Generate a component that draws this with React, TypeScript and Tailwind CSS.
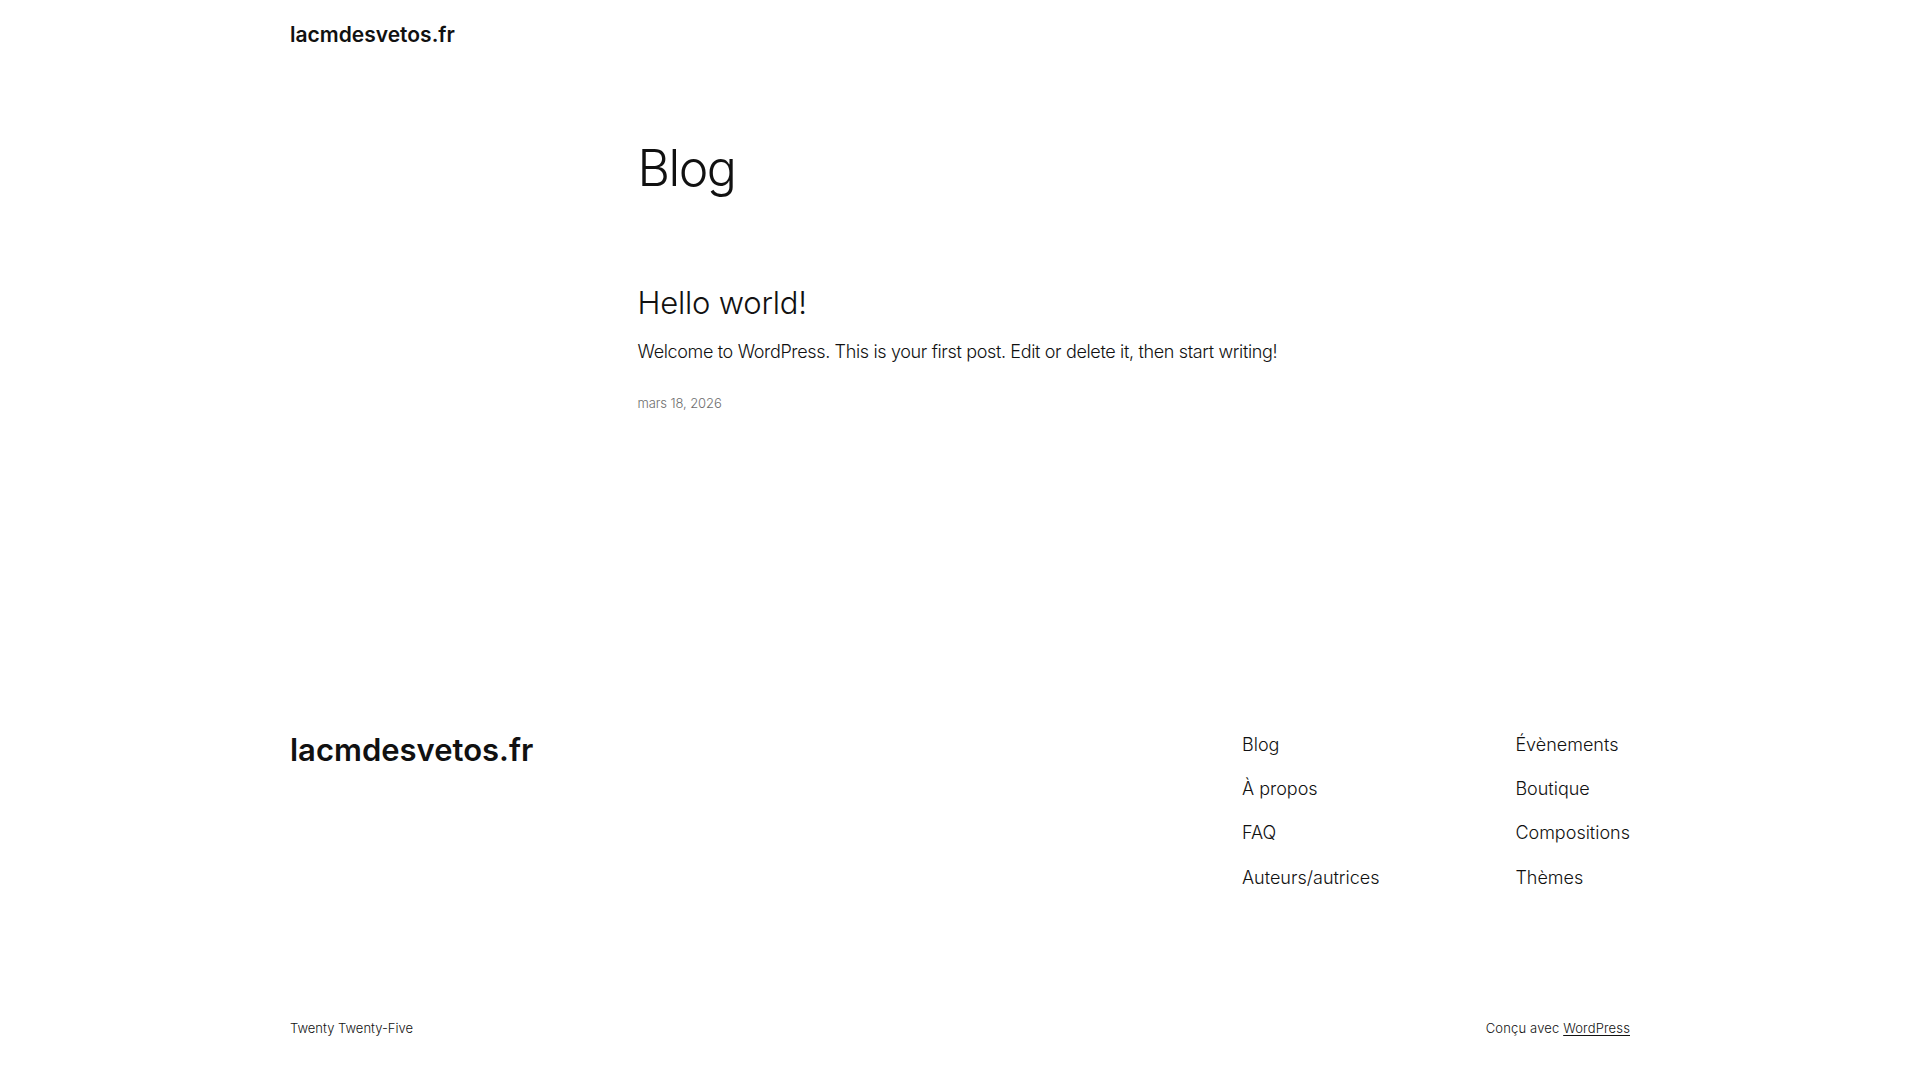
const navLeft = ["Blog", "À propos", "FAQ", "Auteurs/autrices"];
const navRight = ["Évènements", "Boutique", "Compositions", "Thèmes"];

export default function App() {
  return (
    <div className="min-h-screen bg-white text-[#111111] font-['Inter',sans-serif]">
      <div className="mx-auto w-[1340px]">
        {/* header */}
        <header className="flex h-[68px] items-center pt-[2px]">
          <a href="#" className="text-[21px] font-semibold">
            lacmdesvetos.fr
          </a>
        </header>

        {/* blog list */}
        <main className="mx-auto w-[645px]">
          <h1 className="mt-[72px] text-[50px] font-light leading-[56px] tracking-[-1.5px]">Blog</h1>

          <article className="mt-[90px]">
            <h2 className="text-[31px] font-light leading-[34px] tracking-[-0.2px]">
              <a href="#">Hello world!</a>
            </h2>
            <p className="mt-[19px] whitespace-nowrap text-[18px] font-light leading-[25px] tracking-[-0.35px]">
              Welcome to WordPress. This is your first post. Edit or delete it, then start writing!
            </p>
            <div className="mt-[29px] text-[13px] font-light leading-[20px] tracking-[-0.1px] text-[#6e6e6e]">
              mars 18, 2026
            </div>
          </article>
        </main>

        {/* footer */}
        <footer className="mt-[319px]">
          <div className="flex items-start justify-between">
            <a href="#" className="text-[31px] font-semibold leading-[36px]">
              lacmdesvetos.fr
            </a>
            <div className="flex w-[388px]">
              <nav className="flex w-[275px] flex-col gap-[19.2px]">
                {navLeft.map((item) => (
                  <a key={item} href="#" className="text-[18px] font-light leading-[25px]">
                    {item}
                  </a>
                ))}
              </nav>
              <nav className="flex flex-1 flex-col gap-[19.2px]">
                {navRight.map((item) => (
                  <a key={item} href="#" className="text-[18px] font-light leading-[25px]">
                    {item}
                  </a>
                ))}
              </nav>
            </div>
          </div>

          <div className="mt-[128px] flex justify-between text-[13px] font-light leading-[20px]">
            <p>Twenty Twenty-Five</p>
            <p className="tracking-[0.15px]">
              Conçu avec{" "}
              <a href="#" className="underline underline-offset-2">
                WordPress
              </a>
            </p>
          </div>
        </footer>
      </div>
    </div>
  );
}
